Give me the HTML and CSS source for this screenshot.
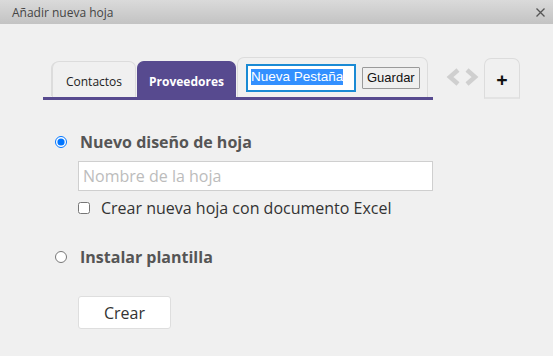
FILE: index.html
```html
<!DOCTYPE html>
<html lang="es">
<head>
    <meta charset="UTF-8">
    <meta name="viewport" content="width=device-width, initial-scale=1.0">
    <title>Añadir nueva hoja</title>
    <link rel="stylesheet" href="styles.css">
</head>
<body>
    <div class="dialog">
        <div class="dialog-header">
            <span class="dialog-title">Añadir nueva hoja</span>
            <svg class="dialog-close" width="9" height="9" viewBox="0 0 9 9">
                <path d="M0.5 0.5 L8.5 8.5 M8.5 0.5 L0.5 8.5" stroke="#555" stroke-width="1.3"/>
            </svg>
        </div>

        <div class="dialog-body">
            <!-- Pestañas -->
            <div class="tab-row">
                <div class="tabs">
                    <div class="tab">Contactos</div>
                    <div class="tab active">Proveedores</div>
                    <div class="tab editing">
                        <div class="tab-input"><span class="selected">Nueva Pestaña</span></div>
                        <button class="tab-save">Guardar</button>
                    </div>
                </div>
                <div class="tab-arrows">
                    <svg width="34" height="18" viewBox="0 0 34 18">
                        <path d="M12 2 L4 9 L12 16" fill="none" stroke="#cfcfcf" stroke-width="4.5" stroke-linejoin="miter"/>
                        <path d="M21 2 L29 9 L21 16" fill="none" stroke="#cfcfcf" stroke-width="4.5" stroke-linejoin="miter"/>
                    </svg>
                </div>
                <div class="tab-add">+</div>
            </div>

            <!-- Opciones -->
            <div class="option">
                <label class="option-label">
                    <input type="radio" name="mode" checked>
                    <span>Nuevo diseño de hoja</span>
                </label>
                <div class="option-fields">
                    <input type="text" class="name-input" placeholder="Nombre de la hoja">
                    <label class="check-label">
                        <input type="checkbox">
                        <span>Crear nueva hoja con documento Excel</span>
                    </label>
                </div>
            </div>

            <div class="option second">
                <label class="option-label">
                    <input type="radio" name="mode">
                    <span>Instalar plantilla</span>
                </label>
            </div>

            <button class="create-button">Crear</button>
        </div>
    </div>
</body>
</html>
```

FILE: styles.css
```css
body {
    margin: 0;
    font-family: 'Open Sans', sans-serif;
    background-color: #f0f0f0;
    color: #333;
}

.dialog {
    width: 553px;
    height: 356px;
    background-color: #f0f0f0;
    overflow: hidden;
}

.dialog-header {
    height: 24px;
    display: flex;
    align-items: center;
    justify-content: space-between;
    padding: 0 8px 0 12px;
    background: linear-gradient(to bottom, #dadada, #c3c3c3);
}

.dialog-title {
    font-size: 12px;
    color: #444;
}

.dialog-body {
    padding: 33px 0 0 43px;
}

/* Pestañas */
.tab-row {
    display: flex;
    align-items: flex-end;
}

.tabs {
    display: flex;
    align-items: flex-end;
    gap: 1px;
    width: 381px;
    padding-left: 9px;
    border-bottom: 3px solid #574a8f;
}

.tab {
    height: 36px;
    box-sizing: border-box;
    display: flex;
    align-items: center;
    justify-content: center;
    border: 1px solid #dcdcdc;
    border-bottom: none;
    border-radius: 7px 7px 0 0;
    font-size: 12px;
    color: #222;
    background-color: #f0f0f0;
}

.tab:first-child {
    width: 84px;
    padding-top: 3px;
    box-shadow: -2px 0 0 -1px #dcdcdc;
}

.tab.active {
    width: 99px;
    padding-top: 3px;
    background-color: #574a8f;
    border-color: #574a8f;
    color: #fff;
    font-weight: 700;
}

.tab.editing {
    width: 191px;
    height: 40px;
    justify-content: flex-start;
    padding: 0 0 0 8px;
    gap: 6px;
}

.tab-input {
    width: 110px;
    height: 28px;
    box-sizing: border-box;
    border: 2px solid #1a8ad4;
    background-color: #fff;
    padding: 3px 0 0 3px;
    font-family: 'Liberation Sans', Arial, sans-serif;
    font-size: 13.5px;
}

.selected {
    background-color: #3390ff;
    color: #fff;
    display: inline-block;
    line-height: 16px;
}

.tab-save {
    height: 22px;
    padding: 0 4px;
    border: 1px solid #9a9a9a;
    border-radius: 1px;
    background-color: #efefef;
    font-family: 'Liberation Sans', Arial, sans-serif;
    font-size: 13px;
    color: #111;
}

.tab-arrows {
    margin: 0 4px 14px 13px;
    height: 18px;
}

.tab-add {
    width: 36px;
    height: 41px;
    box-sizing: border-box;
    margin-bottom: 1px;
    display: flex;
    align-items: center;
    justify-content: center;
    padding-top: 2px;
    border: 1px solid #dcdcdc;
    border-bottom: 2px solid #e3e3e3;
    border-radius: 7px 7px 0 0;
    font-size: 20px;
    font-weight: 700;
    color: #111;
}

/* Opciones */
.option {
    margin-top: 31px;
}

.option.second {
    margin-top: 27px;
}

.option-label {
    display: flex;
    align-items: center;
    font-size: 16px;
    font-weight: 700;
    color: #555;
}

.option-label input {
    margin: 0 13px 0 12px;
    width: 12px;
    height: 12px;
}

.option-fields {
    margin: 8px 0 0 35px;
}

.name-input {
    width: 355px;
    height: 30px;
    box-sizing: border-box;
    border: 1px solid #cfcfcf;
    padding: 0 4px;
    font-family: 'Open Sans', sans-serif;
    font-size: 16px;
    color: #333;
    outline: none;
}

.name-input::placeholder {
    color: #bcbcbc;
}

.check-label {
    display: flex;
    align-items: center;
    margin-top: 6px;
    font-size: 16px;
    color: #333;
}

.check-label input {
    margin: 0 11px 0 0;
    width: 12px;
    height: 12px;
}

.create-button {
    margin: 28px 0 0 35px;
    width: 93px;
    height: 33px;
    background-color: #fff;
    border: 1px solid #dedede;
    border-radius: 3px;
    font-family: 'Open Sans', sans-serif;
    font-size: 16px;
    color: #333;
}
```
